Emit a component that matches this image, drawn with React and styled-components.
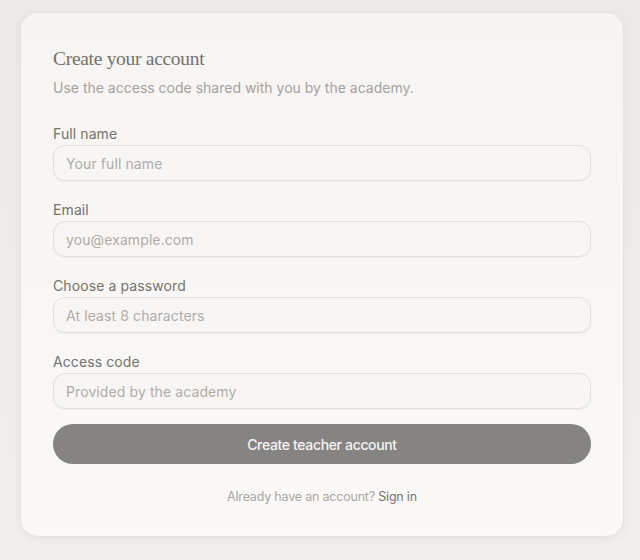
import React from "react";
import styled, { createGlobalStyle } from "styled-components";

const GlobalStyle = createGlobalStyle`
  html, body {
    margin: 0;
    padding: 0;
    background: #ecebe7;
  }
  body {
    font-family: Inter, "Noto Sans", sans-serif;
  }
  * {
    box-sizing: border-box;
  }
`;

const fields = [
  { id: "name", label: "Full name", placeholder: "Your full name", type: "text" },
  { id: "email", label: "Email", placeholder: "you@example.com", type: "email" },
  { id: "password", label: "Choose a password", placeholder: "At least 8 characters", type: "password" },
  { id: "code", label: "Access code", placeholder: "Provided by the academy", type: "text" }
];

const App = () => {
  return (
    <Page>
      <GlobalStyle />
      <Card>
        <Title>Create your account</Title>
        <Subtitle>Use the access code shared with you by the academy.</Subtitle>
        <Form onSubmit={(e) => e.preventDefault()}>
          {fields.map(({ id, label, placeholder, type }) => (
            <Field key={id}>
              <Label htmlFor={id}>{label}</Label>
              <Input id={id} type={type} placeholder={placeholder} />
            </Field>
          ))}
          <Submit type="submit">Create teacher account</Submit>
        </Form>
        <Footer>
          Already have an account? <SignIn href="#">Sign in</SignIn>
        </Footer>
      </Card>
    </Page>
  );
};

const Page = styled.div`
  min-height: 560px;
  padding: 12px 16px 24px 20px;
  background: linear-gradient(180deg, #ebeae6 0%, #f0efeb 100%);
`;

const Card = styled.div`
  background: linear-gradient(180deg, #f6f5f3 0%, #faf9f7 100%);
  border: 1px solid #e5e3df;
  border-radius: 18px;
  box-shadow: 0 2px 8px rgba(80, 70, 60, 0.06);
  padding: 33px 32px 30px;
`;

const Title = styled.h1`
  margin: 0;
  font-family: "Liberation Serif", "DejaVu Serif", serif;
  font-weight: 400;
  font-size: 19.5px;
  line-height: 26px;
  letter-spacing: -0.3px;
  color: #75726d;
`;

const Subtitle = styled.p`
  margin: 6px 0 0;
  font-size: 14px;
  line-height: 20px;
  color: #a5a29d;
`;

const Form = styled.form`
  margin-top: 26px;
  display: flex;
  flex-direction: column;
`;

const Field = styled.div`
  display: flex;
  flex-direction: column;
  gap: 1px;
  margin-bottom: 19px;

  &:nth-last-child(2) {
    margin-bottom: 15px;
  }
`;

const Label = styled.label`
  font-size: 14px;
  line-height: 20px;
  font-weight: 400;
  letter-spacing: 0.1px;
  color: #75726e;
`;

const Input = styled.input`
  height: 36px;
  width: 100%;
  padding: 0 12px;
  border: 1px solid #e3e1dd;
  border-radius: 12px;
  background: #f7f6f4;
  box-shadow: 0 1px 2px rgba(80, 70, 60, 0.06);
  font-family: Inter, "Noto Sans", sans-serif;
  font-size: 14px;
  letter-spacing: 0.1px;
  color: #5e5b57;
  outline: none;

  &::placeholder {
    color: #afaca7;
  }
`;

const Submit = styled.button`
  height: 40px;
  width: 100%;
  border: none;
  border-radius: 20px;
  background: #858482;
  color: #f5f4f2;
  font-family: Inter, "Noto Sans", sans-serif;
  font-size: 14px;
  font-weight: 500;
  letter-spacing: -0.35px;
  cursor: pointer;
`;

const Footer = styled.p`
  margin: 24px 0 0;
  text-align: center;
  font-size: 12.5px;
  line-height: 18px;
  letter-spacing: -0.2px;
  color: #aaa7a2;
`;

const SignIn = styled.a`
  color: #76736f;
  text-decoration: none;
`;

export default App;
